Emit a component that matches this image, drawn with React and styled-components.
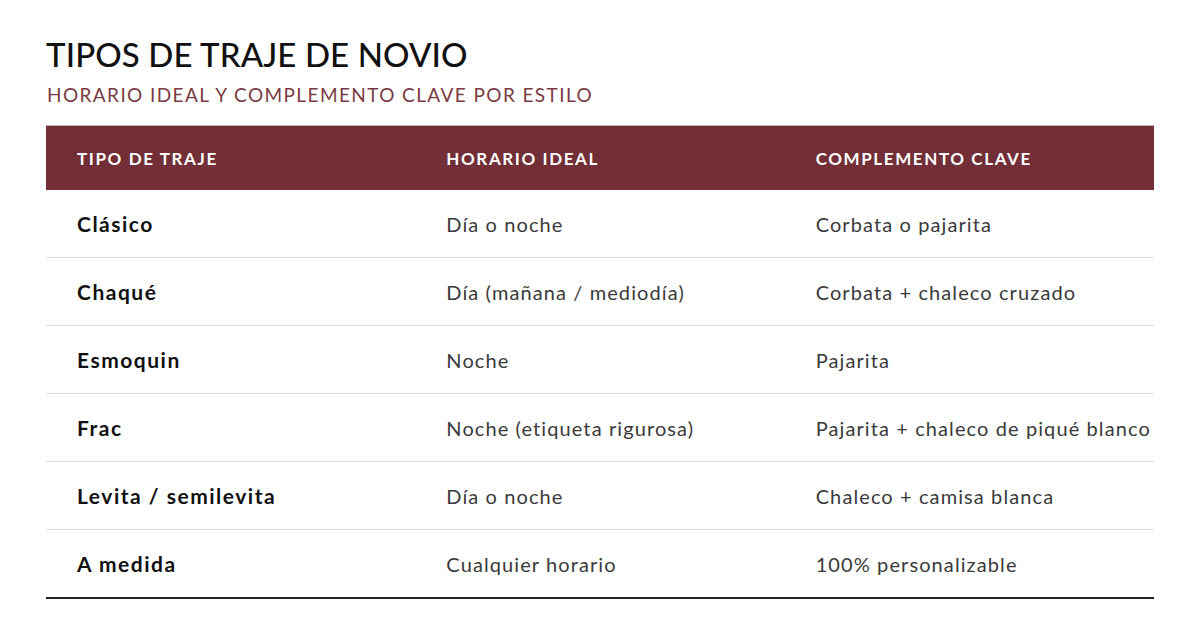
import styled, { createGlobalStyle } from "styled-components";

const GlobalStyle = createGlobalStyle`
    html, body {
        margin: 0;
        padding: 0;
        background: #ffffff;
        font-family: Lato, "Open Sans", "Liberation Sans", sans-serif;
    }
`;

const rows = [
    ["Clásico", "Día o noche", "Corbata o pajarita"],
    ["Chaqué", "Día (mañana / mediodía)", "Corbata + chaleco cruzado"],
    ["Esmoquin", "Noche", "Pajarita"],
    ["Frac", "Noche (etiqueta rigurosa)", "Pajarita + chaleco de piqué blanco"],
    ["Levita / semilevita", "Día o noche", "Chaleco + camisa blanca"],
    ["A medida", "Cualquier horario", "100% personalizable"],
];

const Page = styled.div`
    padding: 34px 46px 40px 46px;
`;

const Title = styled.h2`
    margin: 0;
    font-size: 33px;
    font-weight: 500;
    color: #111;
    letter-spacing: 0.1px;
    line-height: 40px;
`;

const Subtitle = styled.p`
    margin: 8px 0 17px 1px;
    font-size: 19px;
    font-weight: 400;
    color: #7a3b43;
    letter-spacing: 1.4px;
    line-height: 26px;
`;

const Table = styled.table`
    width: 100%;
    border-collapse: collapse;
    table-layout: fixed;
    border-top: 1px solid #b9b0b1;
    border-bottom: 2px solid #222;
`;

const HeadCell = styled.th`
    background: #722f37;
    color: #fff;
    text-align: left;
    font-size: 17px;
    font-weight: 700;
    letter-spacing: 1.6px;
    text-transform: uppercase;
    height: 64px;
    padding: 0 0 0 31px;
`;

const Row = styled.tr`
    border-bottom: 1px solid #dedede;
`;

const Cell = styled.td`
    height: 67px;
    padding: 0 0 0 31px;
    font-size: ${(p) => (p.strong ? "21px" : "20px")};
    font-weight: ${(p) => (p.strong ? 700 : 400)};
    color: ${(p) => (p.strong ? "#111" : "#3a3a3a")};
    white-space: nowrap;
    letter-spacing: ${(p) => (p.strong ? "1.5px" : "1.1px")};
`;

const App = () => {
    return (
        <Page>
            <GlobalStyle />
            <Title>TIPOS DE TRAJE DE NOVIO</Title>
            <Subtitle>HORARIO IDEAL Y COMPLEMENTO CLAVE POR ESTILO</Subtitle>
            <Table>
                <thead>
                    <tr>
                        <HeadCell>Tipo de traje</HeadCell>
                        <HeadCell>Horario ideal</HeadCell>
                        <HeadCell>Complemento clave</HeadCell>
                    </tr>
                </thead>
                <tbody>
                    {rows.map((r) => (
                        <Row key={r[0]}>
                            <Cell strong>{r[0]}</Cell>
                            <Cell>{r[1]}</Cell>
                            <Cell>{r[2]}</Cell>
                        </Row>
                    ))}
                </tbody>
            </Table>
        </Page>
    );
};

export default App;
